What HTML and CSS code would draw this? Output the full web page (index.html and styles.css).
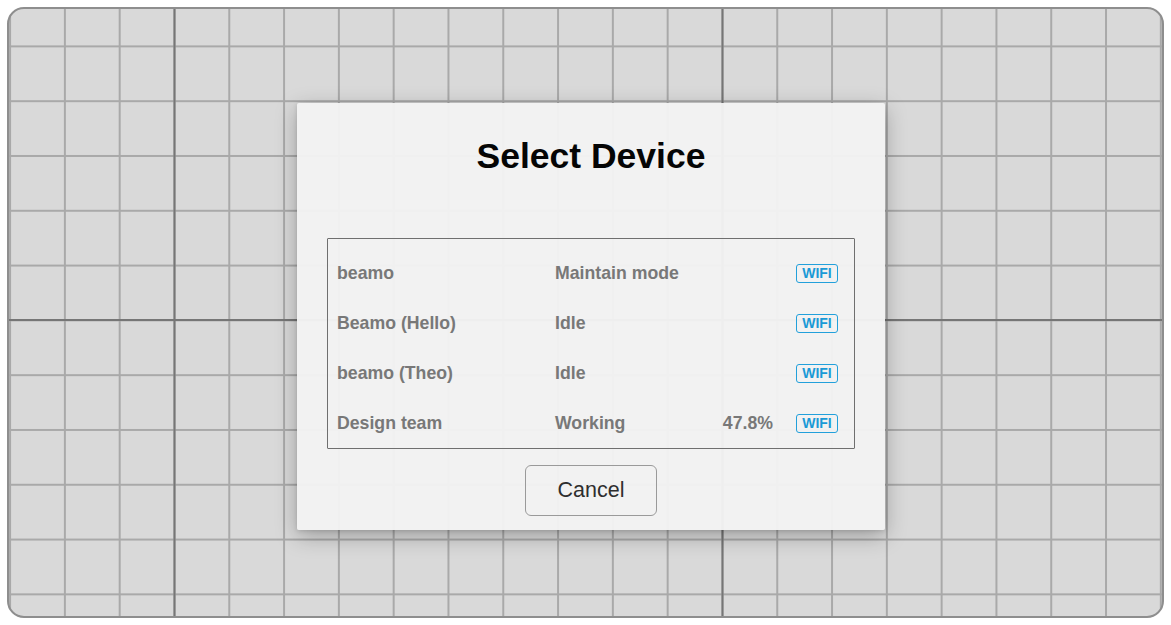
FILE: index.html
```html
<!DOCTYPE html>
<html lang="en">
<head>
<meta charset="utf-8">
<title>Select Device</title>
<link rel="stylesheet" href="styles.css">
</head>
<body>
  <div class="frame">
    <div class="dialog">
      <h1 class="title">Select Device</h1>
      <div class="device-list">
        <div class="device-row">
          <span class="name">beamo</span>
          <span class="status">Maintain mode</span>
          <span class="progress"></span>
          <span class="badge">WIFI</span>
        </div>
        <div class="device-row">
          <span class="name">Beamo (Hello)</span>
          <span class="status">Idle</span>
          <span class="progress"></span>
          <span class="badge">WIFI</span>
        </div>
        <div class="device-row">
          <span class="name">beamo (Theo)</span>
          <span class="status">Idle</span>
          <span class="progress"></span>
          <span class="badge">WIFI</span>
        </div>
        <div class="device-row">
          <span class="name">Design team</span>
          <span class="status">Working</span>
          <span class="progress">47.8%</span>
          <span class="badge">WIFI</span>
        </div>
      </div>
      <div class="actions">
        <button class="btn-cancel" type="button">Cancel</button>
      </div>
    </div>
  </div>
</body>
</html>
```

FILE: styles.css
```css
* {
  box-sizing: border-box;
}

html, body {
  margin: 0;
  padding: 0;
  background: #ffffff;
}

body {
  font-family: "Liberation Sans", Arial, sans-serif;
  width: 1171px;
  height: 625px;
  overflow: hidden;
}

.frame {
  margin: 7px;
  width: 1157px;
  height: 611px;
  border: 2px solid #8e8e8e;
  border-radius: 17px;
  background-color: #d9d9d9;
  background-image:
    linear-gradient(to right, #767676 2px, transparent 2px),
    linear-gradient(to bottom, #767676 2px, transparent 2px),
    linear-gradient(to right, #a9a9a9 1.5px, transparent 1.5px),
    linear-gradient(to bottom, #a9a9a9 1.5px, transparent 1.5px);
  background-size: 548px 100%, 100% 548px, 54.8px 100%, 100% 54.8px;
  background-position: 164.5px 0, 0 310px, 0.1px 0, 0 36.4px;
  display: flex;
  align-items: flex-start;
  overflow: hidden;
}

.dialog {
  margin: 94px 0 0 288px;
  width: 588px;
  height: 427px;
  padding: 33px 30px 14px 30px;
  background: rgba(243, 243, 243, 0.96);
  border-radius: 2px;
  box-shadow: 0 6px 22px rgba(0, 0, 0, 0.28), 0 1px 4px rgba(0, 0, 0, 0.12);
  display: flex;
  flex-direction: column;
}

.title {
  margin: 0;
  font-size: 35.5px;
  line-height: 40px;
  font-weight: 700;
  color: #050505;
  text-align: center;
}

.device-list {
  margin-top: 62px;
  height: 211px;
  border: 1px solid #6f6f6f;
  border-radius: 1px;
  padding: 9px 16px 0 9px;
}

.device-row {
  height: 50px;
  display: grid;
  grid-template-columns: 218px 1fr auto 42px;
  align-items: center;
  font-size: 17.7px;
  font-weight: 700;
  color: #787878;
}

.progress {
  margin-right: 23px;
  text-align: right;
}

.badge {
  width: 42px;
  height: 19px;
  border: 1.5px solid #22a0db;
  border-radius: 3px;
  color: #1a9ad6;
  font-size: 14px;
  font-weight: 700;
  line-height: 16px;
  text-align: center;
}

.actions {
  margin-top: 16px;
  display: flex;
  justify-content: center;
}

.btn-cancel {
  width: 132px;
  height: 51px;
  border: 1px solid #9a9a9a;
  border-radius: 6px;
  background: transparent;
  font-family: "Liberation Sans", Arial, sans-serif;
  font-size: 21.5px;
  color: #2e2e2e;
  padding: 0;
}
```
